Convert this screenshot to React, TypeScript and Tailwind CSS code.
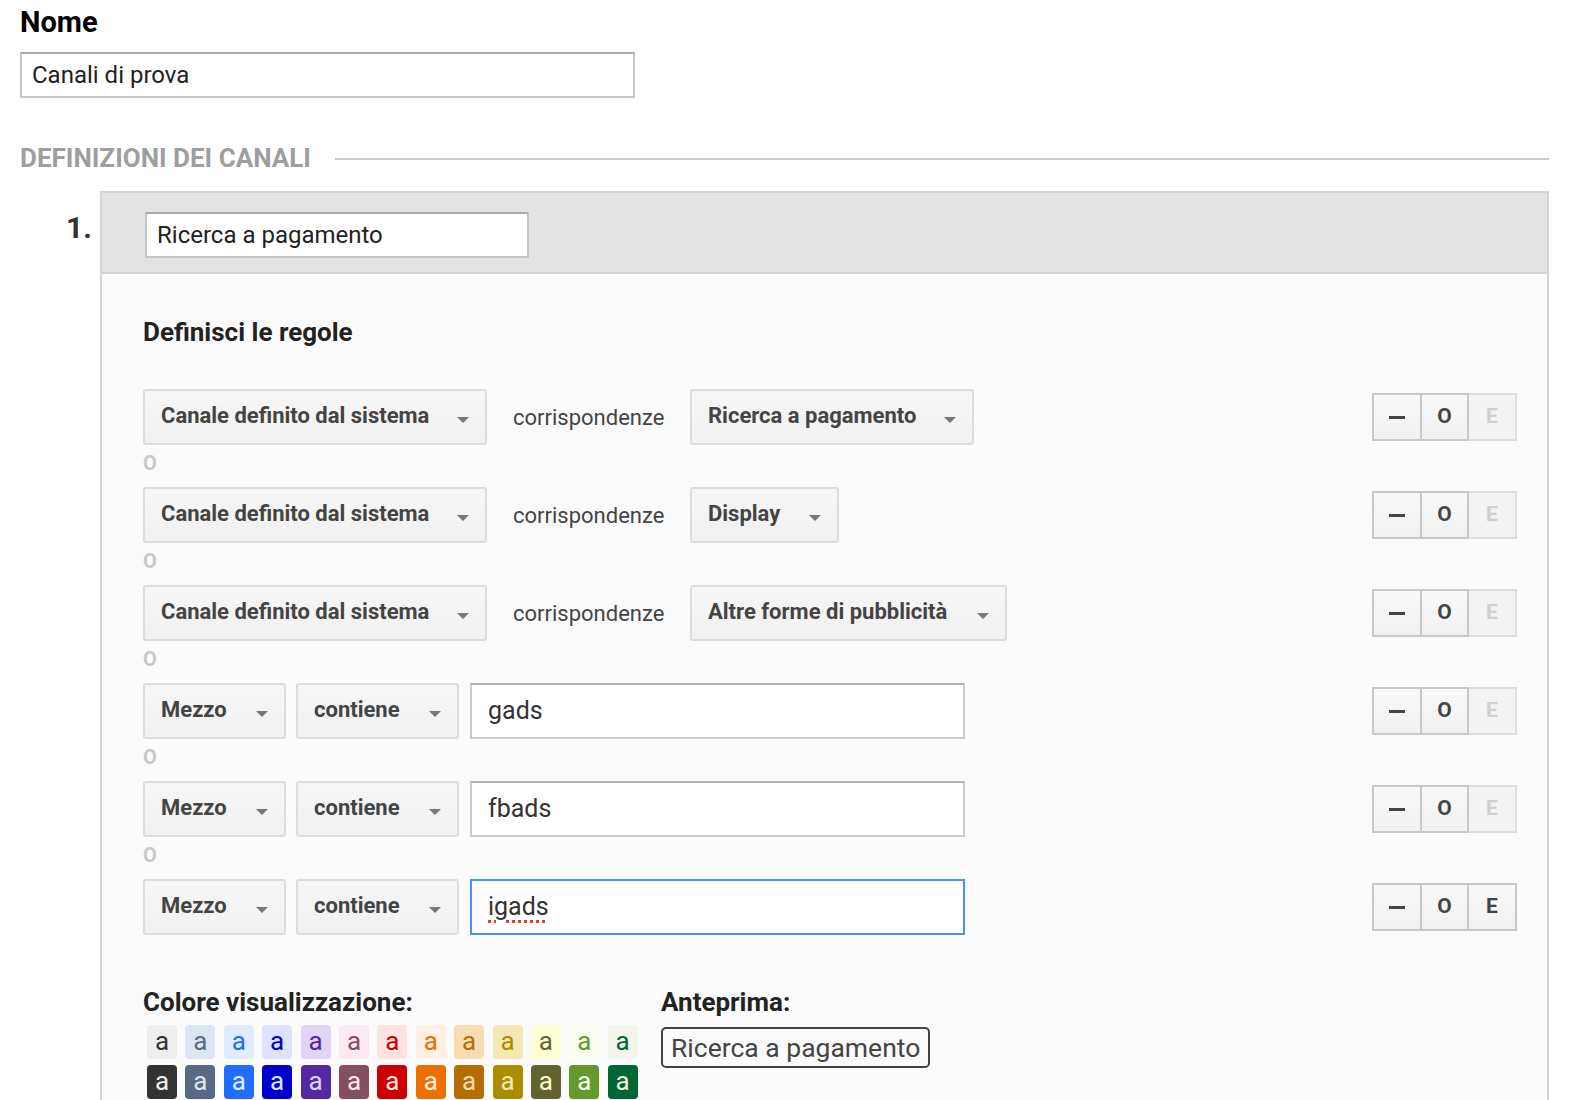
import React from "react";

const light: [string, string][] = [
  ["#eeeeee", "#333333"],
  ["#dee5f2", "#5a6986"],
  ["#e0ecff", "#206cff"],
  ["#dfe2ff", "#0000cc"],
  ["#e0d5f9", "#5229a3"],
  ["#fde9f4", "#854f61"],
  ["#ffe3e3", "#cc0000"],
  ["#fff0e1", "#ec7000"],
  ["#fadcb3", "#b36d00"],
  ["#f3e7b3", "#ab8b00"],
  ["#ffffd4", "#636330"],
  ["#f9ffef", "#64992c"],
  ["#f1f5ec", "#006633"],
];

function Arrow() {
  return (
    <span className="block w-0 h-0 mt-[6px] border-l-[6px] border-r-[6px] border-t-[6px] border-l-transparent border-r-transparent border-t-[#777777]" />
  );
}

function Select({ label, w }: { label: string; w: string }) {
  return (
    <div
      className={`${w} h-[56px] shrink-0 flex items-center justify-between pl-[16px] pr-[16px] border-2 border-[#dddddd] rounded-[3px] bg-linear-to-b from-[#f6f6f6] to-[#f1f1f1] text-[22px] font-bold text-[#444444]`}
    >
      <span className="-mt-[4px] whitespace-nowrap">{label}</span>
      <Arrow />
    </div>
  );
}

function Buttons({ enabled }: { enabled: boolean }) {
  return (
    <div className="ml-auto flex shrink-0">
      <div className="w-[50px] h-[48px] border-2 border-[#c8c8c8] bg-linear-to-b from-[#f9f9f9] to-[#f1f1f1] flex items-center justify-center">
        <span className="block w-[16px] h-[3px] bg-[#444444]" />
      </div>
      <div className="w-[47px] h-[48px] border-2 border-l-0 border-[#c8c8c8] bg-linear-to-b from-[#f9f9f9] to-[#f1f1f1] flex items-center justify-center text-[21px] font-bold text-[#444444]">
        O
      </div>
      {enabled ? (
        <div className="w-[48px] h-[48px] border-2 border-l-0 border-[#c8c8c8] bg-linear-to-b from-[#f9f9f9] to-[#f1f1f1] flex items-center justify-center text-[21px] font-bold text-[#444444]">
          E
        </div>
      ) : (
        <div className="w-[48px] h-[48px] border-2 border-l-0 border-[#dedede] bg-[#f3f3f3] flex items-center justify-center text-[21px] font-bold text-[#cfcfcf]">
          E
        </div>
      )}
    </div>
  );
}

type Rule =
  | { kind: "sys"; value: string; w: string }
  | { kind: "med"; value: string; focus?: boolean };

const rules: Rule[] = [
  { kind: "sys", value: "Ricerca a pagamento", w: "w-[284px]" },
  { kind: "sys", value: "Display", w: "w-[149px]" },
  { kind: "sys", value: "Altre forme di pubblicità", w: "w-[317px]" },
  { kind: "med", value: "gads" },
  { kind: "med", value: "fbads" },
  { kind: "med", value: "igads", focus: true },
];

function RuleRow({ r, last }: { r: Rule; last: boolean }) {
  return (
    <div className="flex items-center h-[56px]">
      {r.kind === "sys" ? (
        <>
          <Select label="Canale definito dal sistema" w="w-[344px]" />
          <div className="w-[203px] shrink-0 pl-[26px] text-[22px] text-[#444444] whitespace-nowrap">
            corrispondenze
          </div>
          <Select label={r.value} w={r.w} />
        </>
      ) : (
        <>
          <Select label="Mezzo" w="w-[143px]" />
          <div className="w-[10px] shrink-0" />
          <Select label="contiene" w="w-[163px]" />
          <div className="w-[11px] shrink-0" />
          <div
            className={`w-[495px] h-[56px] shrink-0 flex items-center pl-[16px] bg-white border-2 text-[25px] text-[#333333] ${
              r.focus ? "border-[#4d90fe]" : "border-[#cccccc] border-t-[#b4b4b4]"
            }`}
          >
            {r.focus ? (
              <span className="underline decoration-dotted decoration-[#e53935] decoration-[3px] underline-offset-[5px]">
                {r.value}
              </span>
            ) : (
              <span>{r.value}</span>
            )}
          </div>
        </>
      )}
      <Buttons enabled={last} />
    </div>
  );
}

export default function App() {
  return (
    <div className="min-h-[1100px] bg-white [font-family:Roboto,'Liberation_Sans',sans-serif] pl-[20px] pr-[27px] pt-[6px]">
      <div className="text-[29px] leading-[32px] font-bold text-black">Nome</div>
      <div className="mt-[14px] w-[615px] h-[46px] border-2 border-[#c6c6c6] border-t-[#a9a9a9] bg-white flex items-center pl-[10px] text-[24px] text-[#222222]">
        Canali di prova
      </div>

      <div className="mt-[45px] flex items-center">
        <span className="text-[26px] leading-[30px] font-bold text-[#9e9e9e] uppercase whitespace-nowrap">
          Definizioni dei canali
        </span>
        <div className="flex-1 h-[2px] bg-[#cccccc] ml-[24px] mt-[1px]" />
      </div>

      <div className="mt-[18px] flex">
        <div className="w-[80px] shrink-0 pt-[19px] pr-[8px] text-right text-[30px] leading-[36px] font-bold text-[#333333]">
          1.
        </div>
        <div className="flex-1 border-2 border-[#d4d4d4]">
          <div className="bg-[#e3e3e3] pt-[19px] pb-[14px] pl-[43px] border-b-2 border-[#d4d4d4]">
            <div className="w-[384px] h-[46px] border-2 border-[#c6c6c6] border-t-[#a9a9a9] bg-white flex items-center pl-[10px] text-[24px] text-[#222222]">
              Ricerca a pagamento
            </div>
          </div>
          <div className="bg-[#fbfbfb] pl-[41px] pr-[30px] pt-[43px] pb-[80px]">
            <div className="text-[26px] leading-[30px] font-bold text-[#222222]">
              Definisci le regole
            </div>
            <div className="mt-[42px] flex flex-col">
              {rules.map((r, i) => (
                <div key={i}>
                  <RuleRow r={r} last={i === rules.length - 1} />
                  {i < rules.length - 1 && (
                    <div className="h-[42px] text-[20px] leading-[36px] font-bold text-[#c8c8c8]">O</div>
                  )}
                </div>
              ))}
            </div>

            <div className="mt-[52px] flex">
              <div className="w-[494px] shrink-0">
                <div className="text-[26px] leading-[30px] font-bold text-[#222222]">
                  Colore visualizzazione:
                </div>
                <div className="mt-[8px] ml-[4px] grid grid-cols-[repeat(13,30px)] gap-x-[8.4px] gap-y-[6px]">
                  {light.map(([bg, fg], i) => (
                    <div
                      key={"l" + i}
                      className="h-[34px] rounded-[4px] flex items-center justify-center text-[26px] leading-none pb-[3px]"
                      style={{ backgroundColor: bg, color: fg }}
                    >
                      a
                    </div>
                  ))}
                  {light.map(([bg, fg], i) => (
                    <div
                      key={"d" + i}
                      className="h-[34px] rounded-[4px] flex items-center justify-center text-[26px] leading-none pb-[3px]"
                      style={{ backgroundColor: fg, color: bg }}
                    >
                      a
                    </div>
                  ))}
                </div>
              </div>
              <div className="ml-[24px]">
                <div className="text-[26px] leading-[30px] font-bold text-[#222222]">Anteprima:</div>
                <div className="mt-[10px] inline-flex h-[41px] items-center px-[8px] border-2 border-[#444444] rounded-[5px] text-[26.5px] text-[#444444] whitespace-nowrap">
                  Ricerca a pagamento
                </div>
              </div>
            </div>
          </div>
        </div>
      </div>
    </div>
  );
}
